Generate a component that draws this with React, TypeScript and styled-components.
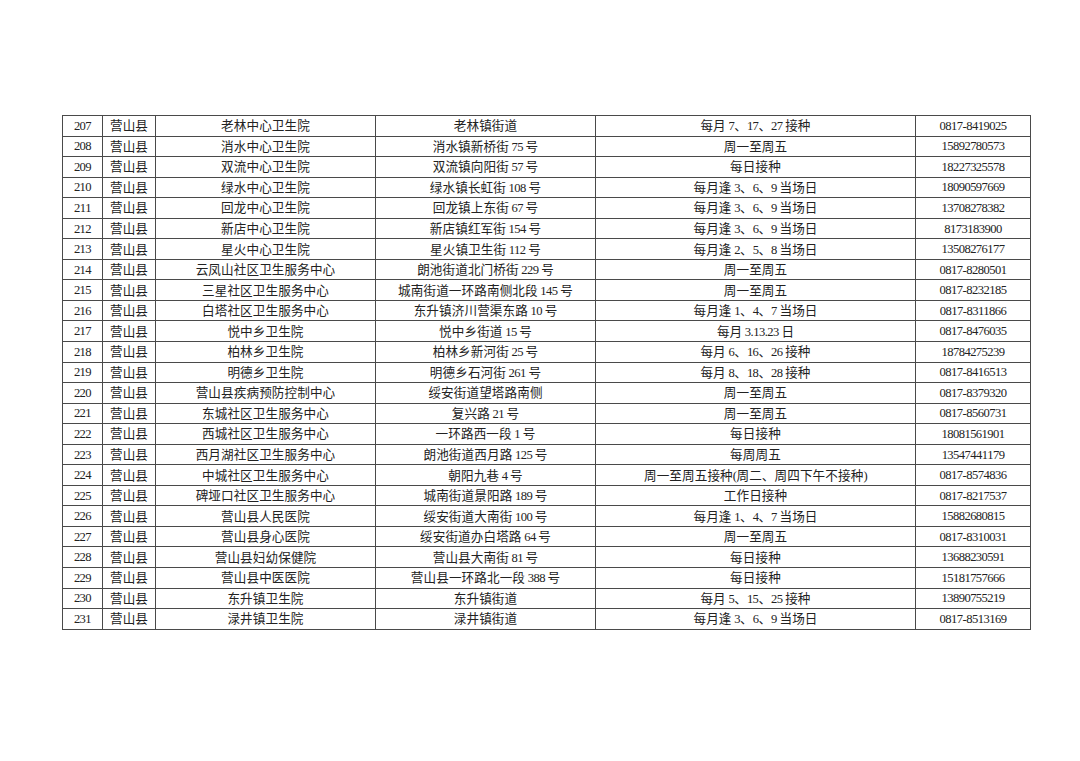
import * as React from 'react';
import styled, { createGlobalStyle } from 'styled-components';

const GlobalStyle = createGlobalStyle`
    html, body {
        margin: 0;
        padding: 0;
        background: #ffffff;
    }
`;

const Page = styled.div`
    width: 1080px;
    height: 761px;
    padding: 115px 0 0 62px;
    box-sizing: border-box;
    background: #ffffff;
`;

const Table = styled.table`
    border-collapse: collapse;
    table-layout: fixed;
    width: 968px;
    font-family: "Liberation Serif", "Noto Sans CJK SC", serif;
    font-size: 12.6px;
    color: #222222;
`;

const Row = styled.tr`
    height: 20.56px;
`;

const Cell = styled.td<{ $w: number }>`
    width: ${props => props.$w}px;
    border: 1px solid #4a4a4a;
    padding: 0;
    text-align: center;
    vertical-align: middle;
    line-height: 18px;
    white-space: nowrap;
    overflow: hidden;
`;

const Num = styled.span`
    font-family: "Liberation Serif", serif;
    letter-spacing: -0.55px;
`;

const Han = styled.span`
    font-family: "Noto Sans CJK SC", sans-serif;
    letter-spacing: 0.1px;
`;

// widths of the content boxes; the collapsed 1px borders sit between them
const ColWidths = [39, 52, 219, 219, 319, 114];

type Record = [string, string, string, string, string, string];

const records: Record[] = [
    ['207', '营山县', '老林中心卫生院', '老林镇街道', '每月 7、17、27 接种', '0817-8419025'],
    ['208', '营山县', '消水中心卫生院', '消水镇新桥街 75 号', '周一至周五', '15892780573'],
    ['209', '营山县', '双流中心卫生院', '双流镇向阳街 57 号', '每日接种', '18227325578'],
    ['210', '营山县', '绿水中心卫生院', '绿水镇长虹街 108 号', '每月逢 3、6、9 当场日', '18090597669'],
    ['211', '营山县', '回龙中心卫生院', '回龙镇上东街 67 号', '每月逢 3、6、9 当场日', '13708278382'],
    ['212', '营山县', '新店中心卫生院', '新店镇红军街 154 号', '每月逢 3、6、9 当场日', '8173183900'],
    ['213', '营山县', '星火中心卫生院', '星火镇卫生街 112 号', '每月逢 2、5、8 当场日', '13508276177'],
    ['214', '营山县', '云凤山社区卫生服务中心', '朗池街道北门桥街 229 号', '周一至周五', '0817-8280501'],
    ['215', '营山县', '三星社区卫生服务中心', '城南街道一环路南侧北段 145 号', '周一至周五', '0817-8232185'],
    ['216', '营山县', '白塔社区卫生服务中心', '东升镇济川营渠东路 10 号', '每月逢 1、4、7 当场日', '0817-8311866'],
    ['217', '营山县', '悦中乡卫生院', '悦中乡街道 15 号', '每月 3.13.23 日', '0817-8476035'],
    ['218', '营山县', '柏林乡卫生院', '柏林乡新河街 25 号', '每月 6、16、26 接种', '18784275239'],
    ['219', '营山县', '明德乡卫生院', '明德乡石河街 261 号', '每月 8、18、28 接种', '0817-8416513'],
    ['220', '营山县', '营山县疾病预防控制中心', '绥安街道望塔路南侧', '周一至周五', '0817-8379320'],
    ['221', '营山县', '东城社区卫生服务中心', '复兴路 21 号', '周一至周五', '0817-8560731'],
    ['222', '营山县', '西城社区卫生服务中心', '一环路西一段 1 号', '每日接种', '18081561901'],
    ['223', '营山县', '西月湖社区卫生服务中心', '朗池街道西月路 125 号', '每周周五', '13547441179'],
    ['224', '营山县', '中城社区卫生服务中心', '朝阳九巷 4 号', '周一至周五接种(周二、周四下午不接种)', '0817-8574836'],
    ['225', '营山县', '碑垭口社区卫生服务中心', '城南街道景阳路 189 号', '工作日接种', '0817-8217537'],
    ['226', '营山县', '营山县人民医院', '绥安街道大南街 100 号', '每月逢 1、4、7 当场日', '15882680815'],
    ['227', '营山县', '营山县身心医院', '绥安街道办白塔路 64 号', '周一至周五', '0817-8310031'],
    ['228', '营山县', '营山县妇幼保健院', '营山县大南街 81 号', '每日接种', '13688230591'],
    ['229', '营山县', '营山县中医医院', '营山县一环路北一段 388 号', '每日接种', '15181757666'],
    ['230', '营山县', '东升镇卫生院', '东升镇街道', '每月 5、15、25 接种', '13890755219'],
    ['231', '营山县', '渌井镇卫生院', '渌井镇街道', '每月逢 3、6、9 当场日', '0817-8513169'],
];

// split a cell text into latin/digit runs and chinese runs
const renderMixed = (text: string) => {
    const parts = text.match(/[0-9A-Za-z.\-() ]+|[^0-9A-Za-z.\-() ]+/g) || [];
    return parts.map((p, i) =>
        /^[0-9A-Za-z.\-() ]+$/.test(p)
            ? <Num key={i}>{p}</Num>
            : <Han key={i}>{p}</Han>
    );
};

const App: React.FC = () => {
    return (
        <Page>
            <GlobalStyle />
            <Table>
                <tbody>
                    {records.map(r => (
                        <Row key={r[0]}>
                            {r.map((v, i) => (
                                <Cell key={i} $w={ColWidths[i]}>{renderMixed(v)}</Cell>
                            ))}
                        </Row>
                    ))}
                </tbody>
            </Table>
        </Page>
    );
};

export default App;
